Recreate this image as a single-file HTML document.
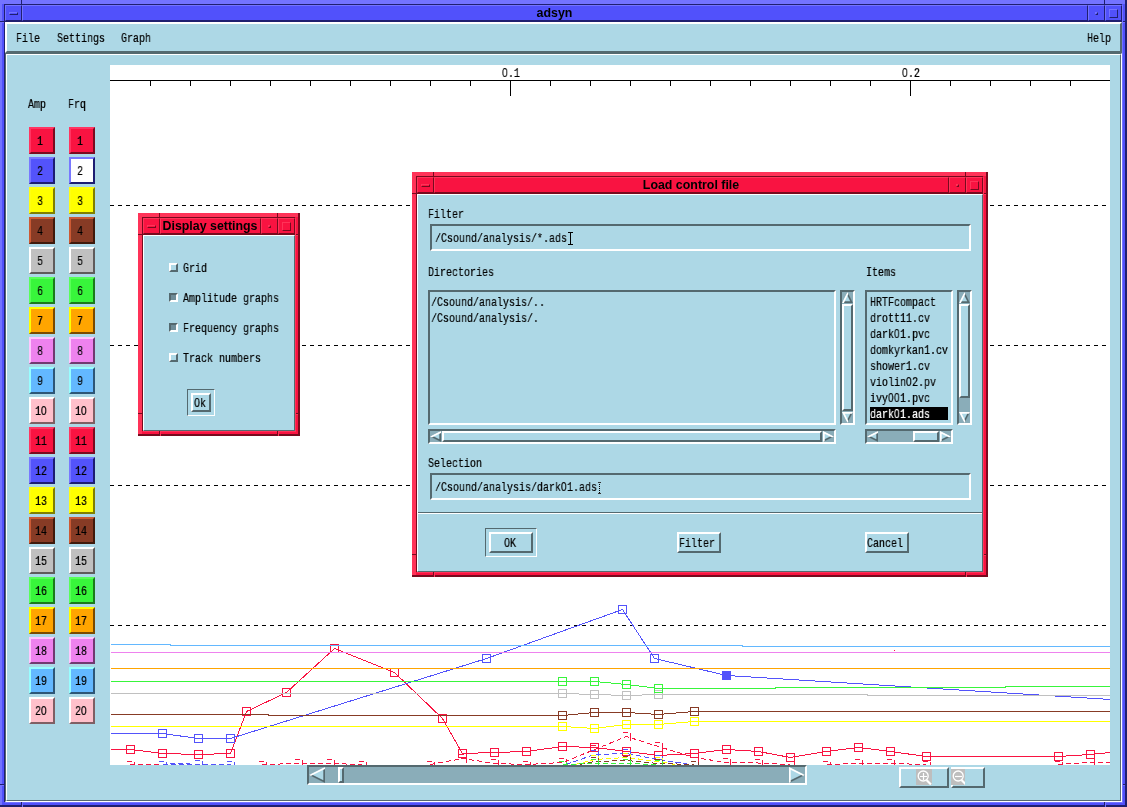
<!DOCTYPE html>
<html><head><meta charset="utf-8"><title>adsyn</title><style>
html,body{margin:0;padding:0}
body{width:1127px;height:807px;overflow:hidden;position:relative;background:#add8e6}
div,span,i,svg{position:absolute;display:block}
.win{overflow:hidden}
.fx{font:13px/13px "Liberation Mono",monospace;white-space:pre;transform:scaleX(.769);transform-origin:0 0;letter-spacing:0;will-change:transform;-webkit-text-stroke-width:.22px;margin-left:-1px}
.fx b{font:13px/0 "Liberation Sans",sans-serif;display:inline;position:static;letter-spacing:.57px}
.ttl{font:bold 12.4px/16px "Liberation Sans",sans-serif;text-align:center;color:#000;white-space:nowrap;will-change:transform}
</style></head><body>
<div class="win" style="left:0px;top:0px;width:1127px;height:807px;background:#5151fb">
<i style="left:0px;top:0px;width:1125px;height:4px;background:#7373ff"></i>
<i style="left:0px;top:0px;width:2px;height:805px;background:#7373ff"></i>
<i style="left:1125px;top:0px;width:2px;height:807px;background:#1f1f70"></i>
<i style="left:0px;top:805px;width:1127px;height:2px;background:#1f1f70"></i>
<i style="left:4px;top:4px;width:1118px;height:1px;background:#1f1f70"></i>
<i style="left:4px;top:4px;width:1px;height:798px;background:#1f1f70"></i>
<i style="left:1122px;top:5px;width:1px;height:798px;background:#7373ff"></i>
<i style="left:5px;top:802px;width:1118px;height:1px;background:#7373ff"></i>
<i style="left:21px;top:0px;width:1px;height:5px;background:#1f1f70"></i>
<i style="left:22px;top:0px;width:1px;height:4px;background:#7373ff"></i>
<i style="left:1104px;top:0px;width:1px;height:5px;background:#1f1f70"></i>
<i style="left:1105px;top:0px;width:1px;height:4px;background:#7373ff"></i>
<i style="left:0px;top:21px;width:5px;height:1px;background:#1f1f70"></i>
<i style="left:0px;top:22px;width:4px;height:1px;background:#7373ff"></i>
<i style="left:0px;top:784px;width:5px;height:1px;background:#1f1f70"></i>
<i style="left:0px;top:785px;width:4px;height:1px;background:#7373ff"></i>
<i style="left:1123px;top:21px;width:2px;height:1px;background:#1f1f70"></i>
<i style="left:1123px;top:22px;width:2px;height:1px;background:#7373ff"></i>
<i style="left:1123px;top:784px;width:2px;height:1px;background:#1f1f70"></i>
<i style="left:1123px;top:785px;width:2px;height:1px;background:#7373ff"></i>
<i style="left:21px;top:802px;width:1px;height:3px;background:#1f1f70"></i>
<i style="left:22px;top:803px;width:1px;height:4px;background:#7373ff"></i>
<i style="left:1104px;top:802px;width:1px;height:3px;background:#1f1f70"></i>
<i style="left:1105px;top:803px;width:1px;height:4px;background:#7373ff"></i>
<i style="left:5px;top:21px;width:1117px;height:1px;background:#1f1f70"></i>
<i style="left:5px;top:5px;width:15px;height:14px;border:1px solid;border-color:#7373ff #1f1f70 #1f1f70 #7373ff"></i>
<i style="left:22px;top:5px;width:1064px;height:14px;border:1px solid;border-color:#7373ff #1f1f70 #1f1f70 #7373ff"></i>
<i style="left:1088px;top:5px;width:15px;height:14px;border:1px solid;border-color:#7373ff #1f1f70 #1f1f70 #7373ff"></i>
<i style="left:1105px;top:5px;width:15px;height:14px;border:1px solid;border-color:#7373ff #1f1f70 #1f1f70 #7373ff"></i>
<i style="left:9px;top:12px;width:7px;height:1px;border:1px solid;border-color:#7373ff #1f1f70 #1f1f70 #7373ff"></i>
<i style="left:1095px;top:12px;width:1px;height:1px;border:1px solid;border-color:#7373ff #1f1f70 #1f1f70 #7373ff"></i>
<i style="left:1109px;top:9px;width:7px;height:7px;border:1px solid;border-color:#7373ff #1f1f70 #1f1f70 #7373ff"></i>
<span class="ttl" style="left:22px;top:5px;width:1065px">adsyn</span>
</div>
<div style="left:5px;top:22px;width:1117px;height:31px;background:#add8e6;box-sizing:border-box;border:2px solid;border-color:#ffffff #54696f #54696f #ffffff"></div>
<span class="fx" style="left:17px;top:32px;color:#000">File</span>
<span class="fx" style="left:58px;top:32px;color:#000">Settings</span>
<span class="fx" style="left:122px;top:32px;color:#000">Graph</span>
<span class="fx" style="left:1088px;top:32px;color:#000">Help</span>
<div style="left:5px;top:53px;width:1117px;height:749px;background:#add8e6;box-sizing:border-box;border:1px solid;border-color:#54696f #ffffff #ffffff #54696f"></div>
<div style="left:6px;top:54px;width:1115px;height:747px;background:#add8e6;box-sizing:border-box;border:1px solid;border-color:#ffffff #54696f #54696f #ffffff"></div>
<span class="fx" style="left:29px;top:98px;color:#000">Amp</span>
<span class="fx" style="left:69px;top:98px;color:#000">Frq</span>
<div style="left:29px;top:127px;width:22px;height:23px;background:#f91341;border:2px solid;border-color:#ff3562 #7a0a1e #7a0a1e #ff3562;"></div>
<span class="fx" style="left:38px;top:135px;color:#000">1</span>
<div style="left:69px;top:127px;width:22px;height:23px;background:#f91341;border:2px solid;border-color:#ff3562 #7a0a1e #7a0a1e #ff3562;"></div>
<span class="fx" style="left:78px;top:135px;color:#000">1</span>
<div style="left:29px;top:157px;width:22px;height:23px;background:#5353fb;border:2px solid;border-color:#7878ff #1d1d72 #1d1d72 #7878ff;"></div>
<span class="fx" style="left:38px;top:165px;color:#000">2</span>
<div style="left:69px;top:157px;width:22px;height:23px;background:#ffffff;border:2px solid;border-color:#7878ff #1d1d72 #1d1d72 #7878ff;"></div>
<span class="fx" style="left:78px;top:165px;color:#000">2</span>
<div style="left:29px;top:187px;width:22px;height:23px;background:#ffff00;border:2px solid;border-color:#ffff10 #807f00 #807f00 #ffff10;"></div>
<span class="fx" style="left:38px;top:195px;color:#000">3</span>
<div style="left:69px;top:187px;width:22px;height:23px;background:#ffff00;border:2px solid;border-color:#ffff10 #807f00 #807f00 #ffff10;"></div>
<span class="fx" style="left:78px;top:195px;color:#000">3</span>
<div style="left:29px;top:217px;width:22px;height:23px;background:#873b25;border:2px solid;border-color:#cc5a34 #3f1a0c #3f1a0c #cc5a34;"></div>
<span class="fx" style="left:38px;top:225px;color:#000">4</span>
<div style="left:69px;top:217px;width:22px;height:23px;background:#873b25;border:2px solid;border-color:#cc5a34 #3f1a0c #3f1a0c #cc5a34;"></div>
<span class="fx" style="left:78px;top:225px;color:#000">4</span>
<div style="left:29px;top:247px;width:22px;height:23px;background:#c0c0c0;border:2px solid;border-color:#ffffff #5f5b5b #5f5b5b #ffffff;"></div>
<span class="fx" style="left:38px;top:255px;color:#000">5</span>
<div style="left:69px;top:247px;width:22px;height:23px;background:#c0c0c0;border:2px solid;border-color:#ffffff #5f5b5b #5f5b5b #ffffff;"></div>
<span class="fx" style="left:78px;top:255px;color:#000">5</span>
<div style="left:29px;top:277px;width:22px;height:23px;background:#38f53b;border:2px solid;border-color:#58ff58 #1b7a1b #1b7a1b #58ff58;"></div>
<span class="fx" style="left:38px;top:285px;color:#000">6</span>
<div style="left:69px;top:277px;width:22px;height:23px;background:#38f53b;border:2px solid;border-color:#58ff58 #1b7a1b #1b7a1b #58ff58;"></div>
<span class="fx" style="left:78px;top:285px;color:#000">6</span>
<div style="left:29px;top:307px;width:22px;height:23px;background:#ffa500;border:2px solid;border-color:#ffff00 #7a4a00 #7a4a00 #ffff00;"></div>
<span class="fx" style="left:38px;top:315px;color:#000">7</span>
<div style="left:69px;top:307px;width:22px;height:23px;background:#ffa500;border:2px solid;border-color:#ffff00 #7a4a00 #7a4a00 #ffff00;"></div>
<span class="fx" style="left:78px;top:315px;color:#000">7</span>
<div style="left:29px;top:337px;width:22px;height:23px;background:#ee82ee;border:2px solid;border-color:#ffc8ff #703a70 #703a70 #ffc8ff;"></div>
<span class="fx" style="left:38px;top:345px;color:#000">8</span>
<div style="left:69px;top:337px;width:22px;height:23px;background:#ee82ee;border:2px solid;border-color:#ffc8ff #703a70 #703a70 #ffc8ff;"></div>
<span class="fx" style="left:78px;top:345px;color:#000">8</span>
<div style="left:29px;top:367px;width:22px;height:23px;background:#63b8ff;border:2px solid;border-color:#97ffff #2d5676 #2d5676 #97ffff;"></div>
<span class="fx" style="left:38px;top:375px;color:#000">9</span>
<div style="left:69px;top:367px;width:22px;height:23px;background:#63b8ff;border:2px solid;border-color:#97ffff #2d5676 #2d5676 #97ffff;"></div>
<span class="fx" style="left:78px;top:375px;color:#000">9</span>
<div style="left:29px;top:397px;width:22px;height:23px;background:#ffc0cb;border:2px solid;border-color:#ffffff #7f5f64 #7f5f64 #ffffff;"></div>
<span class="fx" style="left:36px;top:405px;color:#000">1<b>0</b></span>
<div style="left:69px;top:397px;width:22px;height:23px;background:#ffc0cb;border:2px solid;border-color:#ffffff #7f5f64 #7f5f64 #ffffff;"></div>
<span class="fx" style="left:76px;top:405px;color:#000">1<b>0</b></span>
<div style="left:29px;top:427px;width:22px;height:23px;background:#f91341;border:2px solid;border-color:#ff3562 #7a0a1e #7a0a1e #ff3562;"></div>
<span class="fx" style="left:36px;top:435px;color:#000">11</span>
<div style="left:69px;top:427px;width:22px;height:23px;background:#f91341;border:2px solid;border-color:#ff3562 #7a0a1e #7a0a1e #ff3562;"></div>
<span class="fx" style="left:76px;top:435px;color:#000">11</span>
<div style="left:29px;top:457px;width:22px;height:23px;background:#5353fb;border:2px solid;border-color:#7878ff #1d1d72 #1d1d72 #7878ff;"></div>
<span class="fx" style="left:36px;top:465px;color:#000">12</span>
<div style="left:69px;top:457px;width:22px;height:23px;background:#5353fb;border:2px solid;border-color:#7878ff #1d1d72 #1d1d72 #7878ff;"></div>
<span class="fx" style="left:76px;top:465px;color:#000">12</span>
<div style="left:29px;top:487px;width:22px;height:23px;background:#ffff00;border:2px solid;border-color:#ffff10 #807f00 #807f00 #ffff10;"></div>
<span class="fx" style="left:36px;top:495px;color:#000">13</span>
<div style="left:69px;top:487px;width:22px;height:23px;background:#ffff00;border:2px solid;border-color:#ffff10 #807f00 #807f00 #ffff10;"></div>
<span class="fx" style="left:76px;top:495px;color:#000">13</span>
<div style="left:29px;top:517px;width:22px;height:23px;background:#873b25;border:2px solid;border-color:#cc5a34 #3f1a0c #3f1a0c #cc5a34;"></div>
<span class="fx" style="left:36px;top:525px;color:#000">14</span>
<div style="left:69px;top:517px;width:22px;height:23px;background:#873b25;border:2px solid;border-color:#cc5a34 #3f1a0c #3f1a0c #cc5a34;"></div>
<span class="fx" style="left:76px;top:525px;color:#000">14</span>
<div style="left:29px;top:547px;width:22px;height:23px;background:#c0c0c0;border:2px solid;border-color:#ffffff #5f5b5b #5f5b5b #ffffff;"></div>
<span class="fx" style="left:36px;top:555px;color:#000">15</span>
<div style="left:69px;top:547px;width:22px;height:23px;background:#c0c0c0;border:2px solid;border-color:#ffffff #5f5b5b #5f5b5b #ffffff;"></div>
<span class="fx" style="left:76px;top:555px;color:#000">15</span>
<div style="left:29px;top:577px;width:22px;height:23px;background:#38f53b;border:2px solid;border-color:#58ff58 #1b7a1b #1b7a1b #58ff58;"></div>
<span class="fx" style="left:36px;top:585px;color:#000">16</span>
<div style="left:69px;top:577px;width:22px;height:23px;background:#38f53b;border:2px solid;border-color:#58ff58 #1b7a1b #1b7a1b #58ff58;"></div>
<span class="fx" style="left:76px;top:585px;color:#000">16</span>
<div style="left:29px;top:607px;width:22px;height:23px;background:#ffa500;border:2px solid;border-color:#ffff00 #7a4a00 #7a4a00 #ffff00;"></div>
<span class="fx" style="left:36px;top:615px;color:#000">17</span>
<div style="left:69px;top:607px;width:22px;height:23px;background:#ffa500;border:2px solid;border-color:#ffff00 #7a4a00 #7a4a00 #ffff00;"></div>
<span class="fx" style="left:76px;top:615px;color:#000">17</span>
<div style="left:29px;top:637px;width:22px;height:23px;background:#ee82ee;border:2px solid;border-color:#ffc8ff #703a70 #703a70 #ffc8ff;"></div>
<span class="fx" style="left:36px;top:645px;color:#000">18</span>
<div style="left:69px;top:637px;width:22px;height:23px;background:#ee82ee;border:2px solid;border-color:#ffc8ff #703a70 #703a70 #ffc8ff;"></div>
<span class="fx" style="left:76px;top:645px;color:#000">18</span>
<div style="left:29px;top:667px;width:22px;height:23px;background:#63b8ff;border:2px solid;border-color:#97ffff #2d5676 #2d5676 #97ffff;"></div>
<span class="fx" style="left:36px;top:675px;color:#000">19</span>
<div style="left:69px;top:667px;width:22px;height:23px;background:#63b8ff;border:2px solid;border-color:#97ffff #2d5676 #2d5676 #97ffff;"></div>
<span class="fx" style="left:76px;top:675px;color:#000">19</span>
<div style="left:29px;top:697px;width:22px;height:23px;background:#ffc0cb;border:2px solid;border-color:#ffffff #7f5f64 #7f5f64 #ffffff;"></div>
<span class="fx" style="left:36px;top:705px;color:#000">2<b>0</b></span>
<div style="left:69px;top:697px;width:22px;height:23px;background:#ffc0cb;border:2px solid;border-color:#ffffff #7f5f64 #7f5f64 #ffffff;"></div>
<span class="fx" style="left:76px;top:705px;color:#000">2<b>0</b></span>
<svg class="cv" style="left:110px;top:65px" width="1000" height="700" viewBox="110 65 1000 700" shape-rendering="crispEdges">
<rect x="110" y="65" width="1000" height="700" fill="#fff"/>
<path d="M110 80.5H1110 M150.5 81V86 M190.5 81V86 M230.5 81V86 M270.5 81V86 M310.5 81V86 M350.5 81V86 M390.5 81V86 M430.5 81V86 M470.5 81V86 M510.5 81V96 M550.5 81V86 M590.5 81V86 M630.5 81V86 M670.5 81V86 M710.5 81V86 M750.5 81V86 M790.5 81V86 M830.5 81V86 M870.5 81V86 M910.5 81V96 M950.5 81V86 M990.5 81V86 M1030.5 81V86 M1070.5 81V86" stroke="#000" fill="none"/>
<path d="M110 205.5H1107" stroke="#000" stroke-dasharray="4 4" fill="none"/>
<path d="M110 345.5H1107" stroke="#000" stroke-dasharray="4 4" fill="none"/>
<path d="M110 485.5H1107" stroke="#000" stroke-dasharray="4 4" fill="none"/>
<path d="M110 625.5H1107" stroke="#000" stroke-dasharray="4 4" fill="none"/>
<path d="M110.5 749.5 L130.5 749.5 L162.5 753.5 L198.5 754.5 L230.5 753.5 L246.5 711.5 L286.5 692.5 L334.5 648.5 L394.5 672.5 L442.5 718.5 L462.5 753.5 L494.5 752.5 L526.5 751.5 L562.5 746.5 L594.5 747.5 L626.5 751.5 L658.5 755.5 L694.5 753.5 L726.5 749.5 L758.5 751.5 L790.5 757.5 L826.5 751.5 L858.5 747.5 L890.5 751.5 L926.5 756.5 L1058.5 756.5 L1090.5 754.5 L1110.5 752.5" stroke="#f91341" fill="none" stroke-width="1"/>
<rect x="126.5" y="745.5" width="8" height="8" stroke="#f91341" fill="none"/>
<rect x="158.5" y="749.5" width="8" height="8" stroke="#f91341" fill="none"/>
<rect x="194.5" y="750.5" width="8" height="8" stroke="#f91341" fill="none"/>
<rect x="226.5" y="749.5" width="8" height="8" stroke="#f91341" fill="none"/>
<rect x="242.5" y="707.5" width="8" height="8" stroke="#f91341" fill="none"/>
<rect x="282.5" y="688.5" width="8" height="8" stroke="#f91341" fill="none"/>
<rect x="330.5" y="644.5" width="8" height="8" stroke="#f91341" fill="none"/>
<rect x="390.5" y="668.5" width="8" height="8" stroke="#f91341" fill="none"/>
<rect x="438.5" y="714.5" width="8" height="8" stroke="#f91341" fill="none"/>
<rect x="458.5" y="749.5" width="8" height="8" stroke="#f91341" fill="none"/>
<rect x="490.5" y="748.5" width="8" height="8" stroke="#f91341" fill="none"/>
<rect x="522.5" y="747.5" width="8" height="8" stroke="#f91341" fill="none"/>
<rect x="558.5" y="742.5" width="8" height="8" stroke="#f91341" fill="none"/>
<rect x="590.5" y="743.5" width="8" height="8" stroke="#f91341" fill="none"/>
<rect x="622.5" y="747.5" width="8" height="8" stroke="#f91341" fill="none"/>
<rect x="654.5" y="751.5" width="8" height="8" stroke="#f91341" fill="none"/>
<rect x="690.5" y="749.5" width="8" height="8" stroke="#f91341" fill="none"/>
<rect x="722.5" y="745.5" width="8" height="8" stroke="#f91341" fill="none"/>
<rect x="754.5" y="747.5" width="8" height="8" stroke="#f91341" fill="none"/>
<rect x="786.5" y="753.5" width="8" height="8" stroke="#f91341" fill="none"/>
<rect x="822.5" y="747.5" width="8" height="8" stroke="#f91341" fill="none"/>
<rect x="854.5" y="743.5" width="8" height="8" stroke="#f91341" fill="none"/>
<rect x="886.5" y="747.5" width="8" height="8" stroke="#f91341" fill="none"/>
<rect x="922.5" y="752.5" width="8" height="8" stroke="#f91341" fill="none"/>
<rect x="1054.5" y="752.5" width="8" height="8" stroke="#f91341" fill="none"/>
<rect x="1086.5" y="750.5" width="8" height="8" stroke="#f91341" fill="none"/>
<path d="M110.5 733.5 L162.5 733.5 L198.5 738.5 L230.5 738.5 L486.5 658.5 L622.5 609.5 L654.5 658.5 L726.5 675.5 L1110.5 699.5" stroke="#5353fb" fill="none" stroke-width="1"/>
<rect x="158.5" y="729.5" width="8" height="8" stroke="#5353fb" fill="none"/>
<rect x="194.5" y="734.5" width="8" height="8" stroke="#5353fb" fill="none"/>
<rect x="226.5" y="734.5" width="8" height="8" stroke="#5353fb" fill="none"/>
<rect x="482.5" y="654.5" width="8" height="8" stroke="#5353fb" fill="none"/>
<rect x="618.5" y="605.5" width="8" height="8" stroke="#5353fb" fill="none"/>
<rect x="650.5" y="654.5" width="8" height="8" stroke="#5353fb" fill="none"/>
<rect x="722.5" y="671.5" width="8" height="8" stroke="#5353fb" fill="#5353fb"/>
<path d="M110.5 726.5 L562.5 726.5 L594.5 728.5 L626.5 724.5 L658.5 724.5 L694.5 721.5 L1110.5 721.5" stroke="#ffff00" fill="none" stroke-width="1"/>
<rect x="558.5" y="722.5" width="8" height="8" stroke="#ffff00" fill="none"/>
<rect x="590.5" y="724.5" width="8" height="8" stroke="#ffff00" fill="none"/>
<rect x="622.5" y="720.5" width="8" height="8" stroke="#ffff00" fill="none"/>
<rect x="654.5" y="720.5" width="8" height="8" stroke="#ffff00" fill="none"/>
<rect x="690.5" y="717.5" width="8" height="8" stroke="#ffff00" fill="none"/>
<path d="M110.5 714.5 L268.5 714.5 L268.5 715.5 L562.5 715.5 L594.5 712.5 L626.5 712.5 L658.5 714.5 L694.5 711.5 L1110.5 711.5" stroke="#873b25" fill="none" stroke-width="1"/>
<rect x="558.5" y="711.5" width="8" height="8" stroke="#873b25" fill="none"/>
<rect x="590.5" y="708.5" width="8" height="8" stroke="#873b25" fill="none"/>
<rect x="622.5" y="708.5" width="8" height="8" stroke="#873b25" fill="none"/>
<rect x="654.5" y="710.5" width="8" height="8" stroke="#873b25" fill="none"/>
<rect x="690.5" y="707.5" width="8" height="8" stroke="#873b25" fill="none"/>
<path d="M110.5 693.5 L562.5 693.5 L594.5 694.5 L626.5 695.5 L658.5 694.5 L867.5 694.5 L867.5 695.5 L1110.5 695.5" stroke="#c0c0c0" fill="none" stroke-width="1"/>
<rect x="558.5" y="689.5" width="8" height="8" stroke="#c0c0c0" fill="none"/>
<rect x="590.5" y="690.5" width="8" height="8" stroke="#c0c0c0" fill="none"/>
<rect x="622.5" y="691.5" width="8" height="8" stroke="#c0c0c0" fill="none"/>
<rect x="654.5" y="690.5" width="8" height="8" stroke="#c0c0c0" fill="none"/>
<path d="M110.5 681.5 L562.5 681.5 L594.5 681.5 L626.5 684.5 L658.5 688.5 L775.5 688.5 L775.5 687.5 L1005.5 687.5 L1005.5 686.5 L1110.5 686.5" stroke="#38f53b" fill="none" stroke-width="1"/>
<rect x="558.5" y="677.5" width="8" height="8" stroke="#38f53b" fill="none"/>
<rect x="590.5" y="677.5" width="8" height="8" stroke="#38f53b" fill="none"/>
<rect x="622.5" y="680.5" width="8" height="8" stroke="#38f53b" fill="none"/>
<rect x="654.5" y="684.5" width="8" height="8" stroke="#38f53b" fill="none"/>
<path d="M110.5 668.5 L1110.5 668.5" stroke="#ffa500" fill="none" stroke-width="1"/>
<path d="M110.5 652.5 L1110.5 652.5" stroke="#ee82ee" fill="none" stroke-width="1"/>
<path d="M110.5 644.5 L170.5 644.5 L170.5 645.5 L742.5 645.5 L742.5 646.5 L1110.5 646.5" stroke="#63b8ff" fill="none" stroke-width="1"/>
<path d="M130.4 764.5 L160 764.5" stroke="#f91341" fill="none" stroke-dasharray="5 3" stroke-width="1"/>
<rect x="126.5" y="761.5" width="8" height="8" stroke="#f91341" fill="none" stroke-dasharray="5 3 8 100"/>
<path d="M262 764.5 L298 763.5 L330 763.5 L362 764.5" stroke="#f91341" fill="none" stroke-dasharray="5 3" stroke-width="1"/>
<rect x="258.5" y="761.5" width="8" height="8" stroke="#f91341" fill="none" stroke-dasharray="5 3 8 100"/>
<rect x="294.5" y="759.5" width="8" height="8" stroke="#f91341" fill="none" stroke-dasharray="5 3 8 100"/>
<rect x="326.5" y="759.5" width="8" height="8" stroke="#f91341" fill="none" stroke-dasharray="5 3 8 100"/>
<rect x="358.5" y="761.5" width="8" height="8" stroke="#f91341" fill="none" stroke-dasharray="5 3 8 100"/>
<path d="M430 764.5 L462.8 758.5 L494.4 763.5 L526.6 764.5 L562.6 762.5 L594.6 749.5 L626.5 736.5 L658.3 746.5 L694.5 757.5 L726.4 762.5 L758 763 L790.2 764.5" stroke="#f91341" fill="none" stroke-dasharray="5 3" stroke-width="1"/>
<rect x="426.5" y="761.5" width="8" height="8" stroke="#f91341" fill="none" stroke-dasharray="5 3 8 100"/>
<rect x="458.5" y="754.5" width="8" height="8" stroke="#f91341" fill="none" stroke-dasharray="5 3 8 100"/>
<rect x="490.5" y="759.5" width="8" height="8" stroke="#f91341" fill="none" stroke-dasharray="5 3 8 100"/>
<rect x="522.5" y="761.5" width="8" height="8" stroke="#f91341" fill="none" stroke-dasharray="5 3 8 100"/>
<rect x="558.5" y="758.5" width="8" height="8" stroke="#f91341" fill="none" stroke-dasharray="5 3 8 100"/>
<rect x="590.5" y="745.5" width="8" height="8" stroke="#f91341" fill="none" stroke-dasharray="5 3 8 100"/>
<rect x="622.5" y="732.5" width="8" height="8" stroke="#f91341" fill="none" stroke-dasharray="5 3 8 100"/>
<rect x="654.5" y="742.5" width="8" height="8" stroke="#f91341" fill="none" stroke-dasharray="5 3 8 100"/>
<rect x="690.5" y="753.5" width="8" height="8" stroke="#f91341" fill="none" stroke-dasharray="5 3 8 100"/>
<rect x="722.5" y="758.5" width="8" height="8" stroke="#f91341" fill="none" stroke-dasharray="5 3 8 100"/>
<rect x="754.5" y="759.5" width="8" height="8" stroke="#f91341" fill="none" stroke-dasharray="5 3 8 100"/>
<rect x="786.5" y="761.5" width="8" height="8" stroke="#f91341" fill="none" stroke-dasharray="5 3 8 100"/>
<path d="M826.6 764.5 L858.4 763.5 L890.6 763.5 L926.2 764.5" stroke="#f91341" fill="none" stroke-dasharray="5 3" stroke-width="1"/>
<rect x="822.5" y="761.5" width="8" height="8" stroke="#f91341" fill="none" stroke-dasharray="5 3 8 100"/>
<rect x="854.5" y="759.5" width="8" height="8" stroke="#f91341" fill="none" stroke-dasharray="5 3 8 100"/>
<rect x="886.5" y="759.5" width="8" height="8" stroke="#f91341" fill="none" stroke-dasharray="5 3 8 100"/>
<rect x="922.5" y="761.5" width="8" height="8" stroke="#f91341" fill="none" stroke-dasharray="5 3 8 100"/>
<path d="M1058 764.5 L1090.3 762.5 L1110 762.5" stroke="#f91341" fill="none" stroke-dasharray="5 3" stroke-width="1"/>
<rect x="1054.5" y="761.5" width="8" height="8" stroke="#f91341" fill="none" stroke-dasharray="5 3 8 100"/>
<rect x="1086.5" y="758.5" width="8" height="8" stroke="#f91341" fill="none" stroke-dasharray="5 3 8 100"/>
<path d="M162.7 764.5 L198.5 764.5 L230.6 764.5" stroke="#5353fb" fill="none" stroke-dasharray="5 3" stroke-width="1"/>
<rect x="158.5" y="761.5" width="8" height="8" stroke="#5353fb" fill="none" stroke-dasharray="5 3 8 100"/>
<rect x="194.5" y="760.5" width="8" height="8" stroke="#5353fb" fill="none" stroke-dasharray="5 3 8 100"/>
<rect x="226.5" y="761.5" width="8" height="8" stroke="#5353fb" fill="none" stroke-dasharray="5 3 8 100"/>
<path d="M170 763.5 L190 763.5" stroke="#5353fb" fill="none" stroke-dasharray="5 3" stroke-width="1"/>
<path d="M566 764.5 L594.6 754.5 L626.5 753.5 L658.3 759.5 L690 764.5" stroke="#5353fb" fill="none" stroke-dasharray="5 3" stroke-width="1"/>
<rect x="590.5" y="750.5" width="8" height="8" stroke="#5353fb" fill="none" stroke-dasharray="5 3 8 100"/>
<rect x="622.5" y="749.5" width="8" height="8" stroke="#5353fb" fill="none" stroke-dasharray="5 3 8 100"/>
<rect x="654.5" y="755.5" width="8" height="8" stroke="#5353fb" fill="none" stroke-dasharray="5 3 8 100"/>
<path d="M575 764.5 L594.6 759.5 L626.5 757.5 L658.3 761.5 L675 764.5" stroke="#ffff00" fill="none" stroke-dasharray="5 3" stroke-width="1"/>
<rect x="590.5" y="755.5" width="8" height="8" stroke="#ffff00" fill="none" stroke-dasharray="5 3 8 100"/>
<rect x="622.5" y="753.5" width="8" height="8" stroke="#ffff00" fill="none" stroke-dasharray="5 3 8 100"/>
<rect x="654.5" y="757.5" width="8" height="8" stroke="#ffff00" fill="none" stroke-dasharray="5 3 8 100"/>
<path d="M580 764.5 L594.6 761.5 L626.5 760.5 L658.3 763.5 L694.5 764.5" stroke="#873b25" fill="none" stroke-dasharray="5 3" stroke-width="1"/>
<rect x="590.5" y="757.5" width="8" height="8" stroke="#873b25" fill="none" stroke-dasharray="5 3 8 100"/>
<rect x="622.5" y="756.5" width="8" height="8" stroke="#873b25" fill="none" stroke-dasharray="5 3 8 100"/>
<rect x="654.5" y="759.5" width="8" height="8" stroke="#873b25" fill="none" stroke-dasharray="5 3 8 100"/>
<rect x="690.5" y="761.5" width="8" height="8" stroke="#873b25" fill="none" stroke-dasharray="5 3 8 100"/>
<path d="M562.6 764.5 L594.6 763.5 L626.5 763.5 L658.3 764.5" stroke="#38f53b" fill="none" stroke-dasharray="5 3" stroke-width="1"/>
<rect x="558.5" y="761.5" width="8" height="8" stroke="#38f53b" fill="none" stroke-dasharray="5 3 8 100"/>
<rect x="590.5" y="759.5" width="8" height="8" stroke="#38f53b" fill="none" stroke-dasharray="5 3 8 100"/>
<rect x="622.5" y="759.5" width="8" height="8" stroke="#38f53b" fill="none" stroke-dasharray="5 3 8 100"/>
<rect x="654.5" y="760.5" width="8" height="8" stroke="#38f53b" fill="none" stroke-dasharray="5 3 8 100"/>
<rect x="894" y="650" width="1" height="1" fill="#f91341"/>
</svg>
<span class="fx" style="left:503px;top:67px;color:#000"><b>0</b>.1</span>
<span class="fx" style="left:903px;top:67px;color:#000"><b>0</b>.2</span>
<div style="left:307px;top:765px;width:496px;height:16px;background:#8aadb9;border:2px solid;border-color:#54696f #ffffff #ffffff #54696f"></div>
<svg style="left:309px;top:767px" width="16" height="16"><clipPath id="a1"><polygon points="16,0 16,16 0,8"/></clipPath><g clip-path="url(#a1)"><polygon points="16,0 16,16 0,8" fill="#add8e6"/><path d="M16 0L16 16M16 16L0 8" stroke="#54696f" stroke-width="3.4" fill="none"/><path d="M0 8L16 0" stroke="#ffffff" stroke-width="3.4" fill="none"/></g></svg>
<svg style="left:789px;top:767px" width="16" height="16"><clipPath id="a2"><polygon points="0,0 16,8 0,16"/></clipPath><g clip-path="url(#a2)"><polygon points="0,0 16,8 0,16" fill="#add8e6"/><path d="M16 8L0 16" stroke="#54696f" stroke-width="3.4" fill="none"/><path d="M0 16L0 0M0 0L16 8" stroke="#ffffff" stroke-width="3.4" fill="none"/></g></svg>
<div style="left:338px;top:767px;width:2px;height:12px;background:#add8e6;border:2px solid;border-color:#ffffff #54696f #54696f #ffffff;"></div>
<div style="left:899px;top:767px;width:46px;height:17px;background:#add8e6;border:2px solid;border-color:#ffffff #54696f #54696f #ffffff;"></div>
<div style="left:951px;top:767px;width:30px;height:17px;background:#add8e6;border:2px solid;border-color:#ffffff #54696f #54696f #ffffff;"></div>
<svg style="left:916px;top:769px" width="16" height="16"><rect width="16" height="16" fill="#bebebe"/><circle cx="7.2" cy="7" r="5" fill="none" stroke="#fff" stroke-width="1.3"/><path d="M4 7.5h7M7.5 4v7" stroke="#fff" stroke-width="1.2" fill="none"/><path d="M10.5 11l4.5 4.5" stroke="#fff" stroke-width="2.2"/></svg>
<svg style="left:951px;top:769px" width="14" height="16"><rect width="16" height="16" fill="#bebebe"/><circle cx="7.2" cy="7" r="5" fill="none" stroke="#fff" stroke-width="1.3"/><path d="M4 7.5h7" stroke="#fff" stroke-width="1.2" fill="none"/><path d="M10.5 11l4.5 4.5" stroke="#fff" stroke-width="2.2"/></svg>
<div class="win" style="left:138px;top:213px;width:162px;height:223px;background:#f91341">
<i style="left:0px;top:0px;width:160px;height:4px;background:#ff3358"></i>
<i style="left:0px;top:0px;width:4px;height:221px;background:#ff3358"></i>
<i style="left:160px;top:0px;width:2px;height:223px;background:#780a1e"></i>
<i style="left:0px;top:221px;width:162px;height:2px;background:#780a1e"></i>
<i style="left:4px;top:4px;width:153px;height:1px;background:#780a1e"></i>
<i style="left:4px;top:4px;width:1px;height:214px;background:#780a1e"></i>
<i style="left:157px;top:5px;width:1px;height:214px;background:#ff3358"></i>
<i style="left:5px;top:218px;width:153px;height:1px;background:#ff3358"></i>
<i style="left:21px;top:0px;width:1px;height:5px;background:#780a1e"></i>
<i style="left:22px;top:0px;width:1px;height:4px;background:#ff3358"></i>
<i style="left:139px;top:0px;width:1px;height:5px;background:#780a1e"></i>
<i style="left:140px;top:0px;width:1px;height:4px;background:#ff3358"></i>
<i style="left:0px;top:21px;width:5px;height:1px;background:#780a1e"></i>
<i style="left:0px;top:22px;width:4px;height:1px;background:#ff3358"></i>
<i style="left:0px;top:200px;width:5px;height:1px;background:#780a1e"></i>
<i style="left:0px;top:201px;width:4px;height:1px;background:#ff3358"></i>
<i style="left:158px;top:21px;width:2px;height:1px;background:#780a1e"></i>
<i style="left:158px;top:22px;width:2px;height:1px;background:#ff3358"></i>
<i style="left:158px;top:200px;width:2px;height:1px;background:#780a1e"></i>
<i style="left:158px;top:201px;width:2px;height:1px;background:#ff3358"></i>
<i style="left:21px;top:218px;width:1px;height:3px;background:#780a1e"></i>
<i style="left:22px;top:219px;width:1px;height:4px;background:#ff3358"></i>
<i style="left:139px;top:218px;width:1px;height:3px;background:#780a1e"></i>
<i style="left:140px;top:219px;width:1px;height:4px;background:#ff3358"></i>
<i style="left:5px;top:21px;width:152px;height:1px;background:#780a1e"></i>
<i style="left:5px;top:5px;width:15px;height:14px;border:1px solid;border-color:#ff3358 #780a1e #780a1e #ff3358"></i>
<i style="left:22px;top:5px;width:99px;height:14px;border:1px solid;border-color:#ff3358 #780a1e #780a1e #ff3358"></i>
<i style="left:123px;top:5px;width:15px;height:14px;border:1px solid;border-color:#ff3358 #780a1e #780a1e #ff3358"></i>
<i style="left:140px;top:5px;width:15px;height:14px;border:1px solid;border-color:#ff3358 #780a1e #780a1e #ff3358"></i>
<i style="left:9px;top:12px;width:7px;height:1px;border:1px solid;border-color:#ff3358 #780a1e #780a1e #ff3358"></i>
<i style="left:130px;top:12px;width:1px;height:1px;border:1px solid;border-color:#ff3358 #780a1e #780a1e #ff3358"></i>
<i style="left:144px;top:9px;width:7px;height:7px;border:1px solid;border-color:#ff3358 #780a1e #780a1e #ff3358"></i>
<span class="ttl" style="left:22px;top:5px;width:100px">Display settings</span>
</div>
<div style="left:143px;top:235px;width:152px;height:196px;background:#add8e6;box-sizing:border-box;border:1px solid;border-color:#ffffff #54696f #54696f #ffffff"></div>
<div style="left:169px;top:263px;width:5px;height:5px;background:#add8e6;border:2px solid;border-color:#ffffff #54696f #54696f #ffffff"></div>
<span class="fx" style="left:184px;top:262px;color:#000">Grid</span>
<div style="left:169px;top:293px;width:5px;height:5px;background:#6f8d99;border:2px solid;border-color:#54696f #ffffff #ffffff #54696f"></div>
<span class="fx" style="left:184px;top:292px;color:#000">Amplitude graphs</span>
<div style="left:169px;top:323px;width:5px;height:5px;background:#6f8d99;border:2px solid;border-color:#54696f #ffffff #ffffff #54696f"></div>
<span class="fx" style="left:184px;top:322px;color:#000">Frequency graphs</span>
<div style="left:169px;top:353px;width:5px;height:5px;background:#add8e6;border:2px solid;border-color:#ffffff #54696f #54696f #ffffff"></div>
<span class="fx" style="left:184px;top:352px;color:#000">Track numbers</span>
<div style="left:187px;top:389px;width:28px;height:27px;background:#add8e6;box-sizing:border-box;border:1px solid;border-color:#54696f #ffffff #ffffff #54696f"></div>
<div style="left:191px;top:393px;width:16px;height:15px;background:#add8e6;border:2px solid;border-color:#ffffff #54696f #54696f #ffffff;"></div>
<span class="fx" style="left:195px;top:397px;color:#000">Ok</span>
<div class="win" style="left:412px;top:172px;width:576px;height:405px;background:#f91341">
<i style="left:0px;top:0px;width:574px;height:4px;background:#ff3358"></i>
<i style="left:0px;top:0px;width:4px;height:403px;background:#ff3358"></i>
<i style="left:574px;top:0px;width:2px;height:405px;background:#780a1e"></i>
<i style="left:0px;top:403px;width:576px;height:2px;background:#780a1e"></i>
<i style="left:4px;top:4px;width:567px;height:1px;background:#780a1e"></i>
<i style="left:4px;top:4px;width:1px;height:396px;background:#780a1e"></i>
<i style="left:571px;top:5px;width:1px;height:396px;background:#ff3358"></i>
<i style="left:5px;top:400px;width:567px;height:1px;background:#ff3358"></i>
<i style="left:21px;top:0px;width:1px;height:5px;background:#780a1e"></i>
<i style="left:22px;top:0px;width:1px;height:4px;background:#ff3358"></i>
<i style="left:553px;top:0px;width:1px;height:5px;background:#780a1e"></i>
<i style="left:554px;top:0px;width:1px;height:4px;background:#ff3358"></i>
<i style="left:0px;top:21px;width:5px;height:1px;background:#780a1e"></i>
<i style="left:0px;top:22px;width:4px;height:1px;background:#ff3358"></i>
<i style="left:0px;top:382px;width:5px;height:1px;background:#780a1e"></i>
<i style="left:0px;top:383px;width:4px;height:1px;background:#ff3358"></i>
<i style="left:572px;top:21px;width:2px;height:1px;background:#780a1e"></i>
<i style="left:572px;top:22px;width:2px;height:1px;background:#ff3358"></i>
<i style="left:572px;top:382px;width:2px;height:1px;background:#780a1e"></i>
<i style="left:572px;top:383px;width:2px;height:1px;background:#ff3358"></i>
<i style="left:21px;top:400px;width:1px;height:3px;background:#780a1e"></i>
<i style="left:22px;top:401px;width:1px;height:4px;background:#ff3358"></i>
<i style="left:553px;top:400px;width:1px;height:3px;background:#780a1e"></i>
<i style="left:554px;top:401px;width:1px;height:4px;background:#ff3358"></i>
<i style="left:5px;top:21px;width:566px;height:1px;background:#780a1e"></i>
<i style="left:5px;top:5px;width:15px;height:14px;border:1px solid;border-color:#ff3358 #780a1e #780a1e #ff3358"></i>
<i style="left:22px;top:5px;width:513px;height:14px;border:1px solid;border-color:#ff3358 #780a1e #780a1e #ff3358"></i>
<i style="left:537px;top:5px;width:15px;height:14px;border:1px solid;border-color:#ff3358 #780a1e #780a1e #ff3358"></i>
<i style="left:554px;top:5px;width:15px;height:14px;border:1px solid;border-color:#ff3358 #780a1e #780a1e #ff3358"></i>
<i style="left:9px;top:12px;width:7px;height:1px;border:1px solid;border-color:#ff3358 #780a1e #780a1e #ff3358"></i>
<i style="left:544px;top:12px;width:1px;height:1px;border:1px solid;border-color:#ff3358 #780a1e #780a1e #ff3358"></i>
<i style="left:558px;top:9px;width:7px;height:7px;border:1px solid;border-color:#ff3358 #780a1e #780a1e #ff3358"></i>
<span class="ttl" style="left:22px;top:5px;width:514px">Load control file</span>
</div>
<div style="left:417px;top:194px;width:566px;height:378px;background:#add8e6;box-sizing:border-box;border:1px solid;border-color:#ffffff #54696f #54696f #ffffff"></div>
<span class="fx" style="left:429.4px;top:208px;color:#000">Filter</span>
<div style="left:430px;top:224px;width:537px;height:23px;background:#add8e6;border:2px solid;border-color:#54696f #ffffff #ffffff #54696f"></div>
<span class="fx" style="left:436px;top:232px;color:#000">/Csound/analysis/*.ads</span>
<i class="ab" style="left:570px;top:232px;width:1px;height:13px;background:#000"></i><i class="ab" style="left:568px;top:232px;width:5px;height:1px;background:#000"></i><i class="ab" style="left:568px;top:244px;width:5px;height:1px;background:#000"></i>
<span class="fx" style="left:429.4px;top:266px;color:#000">Directories</span>
<span class="fx" style="left:867.4px;top:266px;color:#000">Items</span>
<div style="left:428px;top:290px;width:404px;height:131px;background:#add8e6;border:2px solid;border-color:#54696f #ffffff #ffffff #54696f"></div>
<span class="fx" style="left:432px;top:296px;color:#000">/Csound/analysis/..</span>
<span class="fx" style="left:432px;top:312px;color:#000">/Csound/analysis/.</span>
<div style="left:840px;top:290px;width:11px;height:131px;background:#8aadb9;border:2px solid;border-color:#54696f #ffffff #ffffff #54696f"></div>
<svg style="left:842px;top:292px" width="11" height="11"><clipPath id="a3"><polygon points="5.5,0 11,11 0,11"/></clipPath><g clip-path="url(#a3)"><polygon points="5.5,0 11,11 0,11" fill="#add8e6"/><path d="M5.5 0L11 11M11 11L0 11" stroke="#54696f" stroke-width="3.4" fill="none"/><path d="M0 11L5.5 0" stroke="#ffffff" stroke-width="3.4" fill="none"/></g></svg>
<svg style="left:842px;top:412px" width="11" height="11"><clipPath id="a4"><polygon points="0,0 11,0 5.5,11"/></clipPath><g clip-path="url(#a4)"><polygon points="0,0 11,0 5.5,11" fill="#add8e6"/><path d="M11 0L5.5 11" stroke="#54696f" stroke-width="3.4" fill="none"/><path d="M0 0L11 0M5.5 11L0 0" stroke="#ffffff" stroke-width="3.4" fill="none"/></g></svg>
<div style="left:842px;top:304px;width:7px;height:103px;background:#add8e6;border:2px solid;border-color:#ffffff #54696f #54696f #ffffff;"></div>
<div style="left:428px;top:429px;width:404px;height:11px;background:#8aadb9;border:2px solid;border-color:#54696f #ffffff #ffffff #54696f"></div>
<svg style="left:430px;top:431px" width="11" height="11"><clipPath id="a5"><polygon points="11,0 11,11 0,5.5"/></clipPath><g clip-path="url(#a5)"><polygon points="11,0 11,11 0,5.5" fill="#add8e6"/><path d="M11 0L11 11M11 11L0 5.5" stroke="#54696f" stroke-width="3.4" fill="none"/><path d="M0 5.5L11 0" stroke="#ffffff" stroke-width="3.4" fill="none"/></g></svg>
<svg style="left:823px;top:431px" width="11" height="11"><clipPath id="a6"><polygon points="0,0 11,5.5 0,11"/></clipPath><g clip-path="url(#a6)"><polygon points="0,0 11,5.5 0,11" fill="#add8e6"/><path d="M11 5.5L0 11" stroke="#54696f" stroke-width="3.4" fill="none"/><path d="M0 11L0 0M0 0L11 5.5" stroke="#ffffff" stroke-width="3.4" fill="none"/></g></svg>
<div style="left:442px;top:431px;width:376px;height:7px;background:#add8e6;border:2px solid;border-color:#ffffff #54696f #54696f #ffffff;"></div>
<div style="left:865px;top:290px;width:84px;height:131px;background:#add8e6;border:2px solid;border-color:#54696f #ffffff #ffffff #54696f"></div>
<span class="fx" style="left:871px;top:296px;color:#000">HRTFcompact</span>
<span class="fx" style="left:871px;top:312px;color:#000">drott11.cv</span>
<span class="fx" style="left:871px;top:328px;color:#000">dark<b>0</b>1.pvc</span>
<span class="fx" style="left:871px;top:344px;color:#000">domkyrkan1.cv</span>
<span class="fx" style="left:871px;top:360px;color:#000">shower1.cv</span>
<span class="fx" style="left:871px;top:376px;color:#000">violin<b>0</b>2.pv</span>
<span class="fx" style="left:871px;top:392px;color:#000">ivy<b>0</b><b>0</b>1.pvc</span>
<div style="left:870px;top:407px;width:78px;height:13px;background:#000;"></div>
<span class="fx" style="left:871px;top:408px;color:#fff">dark<b>0</b>1.ads</span>
<div style="left:957px;top:290px;width:11px;height:131px;background:#8aadb9;border:2px solid;border-color:#54696f #ffffff #ffffff #54696f"></div>
<svg style="left:959px;top:292px" width="11" height="11"><clipPath id="a7"><polygon points="5.5,0 11,11 0,11"/></clipPath><g clip-path="url(#a7)"><polygon points="5.5,0 11,11 0,11" fill="#add8e6"/><path d="M5.5 0L11 11M11 11L0 11" stroke="#54696f" stroke-width="3.4" fill="none"/><path d="M0 11L5.5 0" stroke="#ffffff" stroke-width="3.4" fill="none"/></g></svg>
<svg style="left:959px;top:412px" width="11" height="11"><clipPath id="a8"><polygon points="0,0 11,0 5.5,11"/></clipPath><g clip-path="url(#a8)"><polygon points="0,0 11,0 5.5,11" fill="#add8e6"/><path d="M11 0L5.5 11" stroke="#54696f" stroke-width="3.4" fill="none"/><path d="M0 0L11 0M5.5 11L0 0" stroke="#ffffff" stroke-width="3.4" fill="none"/></g></svg>
<div style="left:959px;top:304px;width:7px;height:90px;background:#add8e6;border:2px solid;border-color:#ffffff #54696f #54696f #ffffff;"></div>
<div style="left:865px;top:429px;width:84px;height:11px;background:#8aadb9;border:2px solid;border-color:#54696f #ffffff #ffffff #54696f"></div>
<svg style="left:867px;top:431px" width="11" height="11"><clipPath id="a9"><polygon points="11,0 11,11 0,5.5"/></clipPath><g clip-path="url(#a9)"><polygon points="11,0 11,11 0,5.5" fill="#add8e6"/><path d="M11 0L11 11M11 11L0 5.5" stroke="#54696f" stroke-width="3.4" fill="none"/><path d="M0 5.5L11 0" stroke="#ffffff" stroke-width="3.4" fill="none"/></g></svg>
<svg style="left:940px;top:431px" width="11" height="11"><clipPath id="a10"><polygon points="0,0 11,5.5 0,11"/></clipPath><g clip-path="url(#a10)"><polygon points="0,0 11,5.5 0,11" fill="#add8e6"/><path d="M11 5.5L0 11" stroke="#54696f" stroke-width="3.4" fill="none"/><path d="M0 11L0 0M0 0L11 5.5" stroke="#ffffff" stroke-width="3.4" fill="none"/></g></svg>
<div style="left:913px;top:431px;width:22px;height:7px;background:#add8e6;border:2px solid;border-color:#ffffff #54696f #54696f #ffffff;"></div>
<span class="fx" style="left:429.4px;top:457px;color:#000">Selection</span>
<div style="left:430px;top:473px;width:537px;height:23px;background:#add8e6;border:2px solid;border-color:#54696f #ffffff #ffffff #54696f"></div>
<span class="fx" style="left:436px;top:481px;color:#000">/Csound/analysis/dark<b>0</b>1.ads</span>
<i class="ab" style="left:599px;top:482px;width:1px;height:12px;background:repeating-linear-gradient(#000 0 1px,transparent 1px 2px)"></i><i class="ab" style="left:598px;top:482px;width:3px;height:1px;background:#333"></i><i class="ab" style="left:598px;top:493px;width:3px;height:1px;background:#333"></i>
<div style="left:418px;top:512px;width:564px;height:1px;background:#54696f;"></div>
<div style="left:418px;top:513px;width:564px;height:1px;background:#ffffff;"></div>
<div style="left:485px;top:528px;width:52px;height:29px;background:#add8e6;box-sizing:border-box;border:1px solid;border-color:#54696f #ffffff #ffffff #54696f"></div>
<div style="left:489px;top:532px;width:40px;height:17px;background:#add8e6;border:2px solid;border-color:#ffffff #54696f #54696f #ffffff;"></div>
<span class="fx" style="left:505px;top:537px;color:#000">OK</span>
<div style="left:677px;top:532px;width:40px;height:17px;background:#add8e6;border:2px solid;border-color:#ffffff #54696f #54696f #ffffff;"></div>
<span class="fx" style="left:680px;top:537px;color:#000">Filter</span>
<div style="left:865px;top:532px;width:40px;height:17px;background:#add8e6;border:2px solid;border-color:#ffffff #54696f #54696f #ffffff;"></div>
<span class="fx" style="left:868px;top:537px;color:#000">Cancel</span>
</body></html>
